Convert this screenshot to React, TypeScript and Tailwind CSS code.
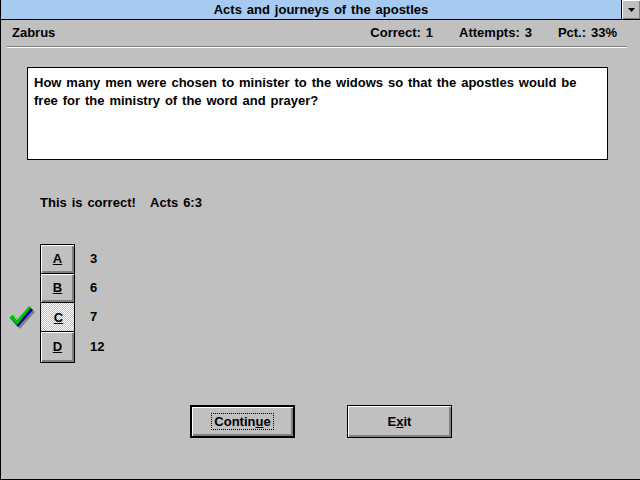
const font = "font-['Liberation_Sans',Arial,sans-serif]"

function Bevel({ pressed, children, className }: { pressed?: boolean; children: React.ReactNode; className?: string }) {
  return (
    <div
      className={`flex items-center justify-center border border-black ${className ?? ''} ${
        pressed
          ? 'bg-[repeating-conic-gradient(#c0c0c0_0_25%,#ffffff_0_50%)] bg-[length:2px_2px]'
          : 'bg-[#c0c0c0] shadow-[inset_1px_1px_0_#fff,inset_-2px_-2px_0_#808080]'
      }`}
    >
      {children}
    </div>
  )
}

function Check() {
  return (
    <svg width="28" height="26" viewBox="0 0 28 26">
      <path d="M4 16 L8 13 L12 19 L24 5 L27 8 L12 25 Z" fill="#808080" />
      <path d="M2 14 L6 11 L10 17 L22 3 L25 6 L10 23 Z" fill="#0000a8" />
      <path d="M1 13 L5 10 L9 16 L21 2 L23 4 L9 21 Z" fill="#00c000" />
      <path d="M1 13 L5 10 L9 16" stroke="#80ff80" strokeWidth="1" fill="none" />
    </svg>
  )
}

const answers = [
  { key: 'A', text: '3' },
  { key: 'B', text: '6' },
  { key: 'C', text: '7', pressed: true },
  { key: 'D', text: '12' },
]

export default function App() {
  return (
    <div className={`w-[640px] h-[480px] bg-[#c0c0c0] border-l border-b border-black flex flex-col text-[13px] font-bold text-black [word-spacing:1.3px] ${font}`}>
      <div className="h-[20px] flex bg-[#a6caf0] border-b border-black">
        <div className="flex-1 text-center leading-[19px] pl-[20px]">Acts and journeys of the apostles</div>
        <div className="w-[19px] h-[19px] border-l border-black bg-[#c0c0c0] shadow-[inset_1px_1px_0_#fff,inset_-1px_-1px_0_#808080] flex items-center justify-center">
          <svg width="7" height="4" viewBox="0 0 7 4">
            <path d="M0 0 H7 L3.5 4 Z" fill="#000" />
          </svg>
        </div>
      </div>

      <div className="flex items-center h-[25px] pl-[11px] pr-[23px] pt-[1px]">
        <span>Zabrus</span>
        <span className="ml-auto">Correct: 1</span>
        <span className="ml-[26px]">Attempts: 3</span>
        <span className="ml-[26px]">Pct.: 33%</span>
      </div>

      <div className="mx-[6px] mt-[1px] h-[2px] border-t border-[#808080] border-b border-b-white w-[620px]" />

      <div className="ml-[26px] mt-[19px] w-[581px] h-[93px] bg-white border border-black px-[6px] pt-[6px] leading-[18px]">
        How many men were chosen to minister to the widows so that the apostles would be free for the ministry of the word and prayer?
      </div>

      <div className="ml-[39px] mt-[35px] leading-[16px]">
        This is correct!&nbsp;&nbsp; Acts 6:3
      </div>

      <div className="mt-[33px] flex flex-col">
        {answers.map((a, i) => (
          <div key={a.key} className={`flex items-center ${i > 0 ? '-mt-px' : ''}`}>
            <div className="w-[39px] flex justify-start pl-[7px]">{a.pressed && <Check />}</div>
            <Bevel pressed={a.pressed} className={`w-[35px] ${i === 3 ? 'h-[32px]' : 'h-[30px]'}`}>
              <span className={`underline ${a.pressed ? 'ml-[2px] mt-[2px]' : ''}`}>{a.key}</span>
            </Bevel>
            <span className="ml-[15px]">{a.text}</span>
          </div>
        ))}
      </div>

      <div className="mt-[42px] flex">
        <div className="ml-[189px] w-[105px] h-[33px] border-2 border-black bg-[#c0c0c0] shadow-[inset_1px_1px_0_#fff,inset_-2px_-2px_0_#808080] flex items-center justify-center">
          <span className="border border-dotted border-black px-[2px] leading-[15px]">
            Contin<span className="underline">u</span>e
          </span>
        </div>
        <Bevel className="ml-[52px] w-[105px] h-[33px]">
          <span>
            E<span className="underline">x</span>it
          </span>
        </Bevel>
      </div>
    </div>
  )
}
